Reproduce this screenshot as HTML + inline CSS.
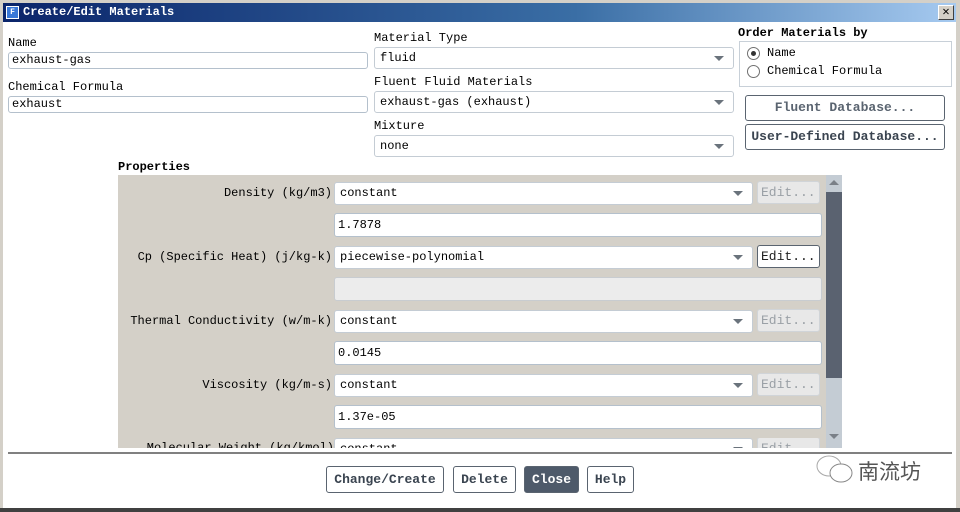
<!DOCTYPE html>
<html><head><meta charset="utf-8"><style>
*{box-sizing:border-box;margin:0;padding:0}
body{width:960px;height:512px;overflow:hidden;background:#d4d0c8;font-family:"Liberation Mono","Noto Sans CJK SC",monospace;font-size:12px;color:#000;position:relative}
.a{position:absolute;white-space:nowrap}
.win{position:absolute;left:3px;top:3px;width:953px;height:505px;background:#fff}
.title{position:absolute;left:3px;top:3px;width:953px;height:19px;background:linear-gradient(90deg,#0a246a,#3a6ea5 60%,#a6caf0)}
.in{position:absolute;background:#fff;border:1px solid #b4c0cc;border-radius:3px;padding:0 3px;line-height:15px}
.sel{position:absolute;background:#fff;border:1px solid #c4ccd4;border-radius:3px;padding:0 5px;line-height:20px}
.sel:after{content:"";position:absolute;right:9px;top:8px;border-left:5px solid transparent;border-right:5px solid transparent;border-top:5px solid #6a737c}
.btn{position:absolute;border:1px solid #5a6470;border-radius:3px;text-align:center;font-weight:bold;color:#3a4450;background:#fff;font-size:13px}
.ed{position:absolute;width:63px;height:23px;border:1px solid #d0d4d8;border-radius:3px;background:#e8e8e8;color:#9aa0a6;line-height:21px;padding-left:3px;font-size:13px}
.lbl{position:absolute;right:628px;text-align:right;white-space:nowrap}
</style></head><body>
<div class="win"></div>
<div class="title"></div>
<div class="a" style="left:6px;top:6px;width:13px;height:13px;background:#3a78d8;border:1px solid #fff;color:#fff;font-size:8px;line-height:11px;text-align:center;font-weight:bold">F</div>
<div class="a" style="left:23px;top:5px;color:#fff;font-weight:bold;line-height:15px">Create/Edit Materials</div>
<div class="a" style="left:938px;top:5px;width:16px;height:15px;background:#d4d0c8;border:1px solid;border-color:#fff #404040 #404040 #fff;font-weight:bold;text-align:center;line-height:12px">✕</div>

<div class="a" style="left:8px;top:36px">Name</div>
<div class="in" style="left:8px;top:52px;width:360px;height:17px">exhaust-gas</div>
<div class="a" style="left:8px;top:80px">Chemical Formula</div>
<div class="in" style="left:8px;top:96px;width:360px;height:17px">exhaust</div>

<div class="a" style="left:374px;top:31px">Material Type</div>
<div class="sel" style="left:374px;top:47px;width:360px;height:22px">fluid</div>
<div class="a" style="left:374px;top:75px">Fluent Fluid Materials</div>
<div class="sel" style="left:374px;top:91px;width:360px;height:22px">exhaust-gas (exhaust)</div>
<div class="a" style="left:374px;top:119px">Mixture</div>
<div class="sel" style="left:374px;top:135px;width:360px;height:22px">none</div>

<div class="a" style="left:738px;top:26px;font-weight:bold">Order Materials by</div>
<div class="a" style="left:739px;top:41px;width:213px;height:46px;border:1px solid #c8d0d8"></div>
<div class="a" style="left:747px;top:47px;width:13px;height:13px;border:1px solid #707070;border-radius:50%;background:#fff"><div style="margin:3px;width:5px;height:5px;border-radius:50%;background:#333"></div></div>
<div class="a" style="left:767px;top:46px">Name</div>
<div class="a" style="left:747px;top:65px;width:13px;height:13px;border:1px solid #707070;border-radius:50%;background:#fff"></div>
<div class="a" style="left:767px;top:64px">Chemical Formula</div>
<div class="btn" style="left:745px;top:95px;width:200px;height:26px;line-height:24px;color:#5a6470">Fluent Database...</div>
<div class="btn" style="left:745px;top:124px;width:200px;height:26px;line-height:24px">User-Defined Database...</div>

<div class="a" style="left:118px;top:160px;font-weight:bold">Properties</div>
<div class="a" style="left:118px;top:175px;width:724px;height:273px;background:#d4d0c8;overflow:hidden"></div>
<div class="a" style="left:826px;top:175px;width:16px;height:273px;background:#c4ccd4"></div>
<div class="a" style="left:826px;top:192px;width:16px;height:186px;background:#5a6270"></div>
<div class="a" style="left:829px;top:180px;border-left:5px solid transparent;border-right:5px solid transparent;border-bottom:5px solid #7a8088"></div>
<div class="a" style="left:829px;top:434px;border-left:5px solid transparent;border-right:5px solid transparent;border-top:5px solid #7a8088"></div>

<div class="lbl" style="top:186px">Density (kg/m3)</div>
<div class="sel" style="left:334px;top:182px;width:419px;height:23px">constant</div>
<div class="ed" style="left:757px;top:181px">Edit...</div>
<div class="in" style="left:334px;top:213px;width:488px;height:24px;line-height:22px">1.7878</div>

<div class="lbl" style="top:250px">Cp (Specific Heat) (j/kg-k)</div>
<div class="sel" style="left:334px;top:246px;width:419px;height:23px">piecewise-polynomial</div>
<div class="ed" style="left:757px;top:245px;background:#fff;border-color:#5a6470;color:#222">Edit...</div>
<div class="in" style="left:334px;top:277px;width:488px;height:24px;background:#ececec;border-color:#c8ccd0"></div>

<div class="lbl" style="top:314px">Thermal Conductivity (w/m-k)</div>
<div class="sel" style="left:334px;top:310px;width:419px;height:23px">constant</div>
<div class="ed" style="left:757px;top:309px">Edit...</div>
<div class="in" style="left:334px;top:341px;width:488px;height:24px;line-height:22px">0.0145</div>

<div class="lbl" style="top:378px">Viscosity (kg/m-s)</div>
<div class="sel" style="left:334px;top:374px;width:419px;height:23px">constant</div>
<div class="ed" style="left:757px;top:373px">Edit...</div>
<div class="in" style="left:334px;top:405px;width:488px;height:24px;line-height:22px">1.37e-05</div>

<div class="a" style="left:118px;top:438px;width:708px;height:10px;overflow:hidden">
 <div class="lbl" style="right:492px;top:3px;position:absolute">Molecular Weight (kg/kmol)</div>
 <div class="sel" style="left:216px;top:0;width:419px;height:23px">constant</div>
 <div class="ed" style="left:639px;top:-1px">Edit...</div>
</div>

<div class="a" style="left:8px;top:452px;width:944px;height:2px;background:#808080"></div>
<div class="btn" style="left:326px;top:466px;width:118px;height:27px;line-height:25px">Change/Create</div>
<div class="btn" style="left:453px;top:466px;width:63px;height:27px;line-height:25px">Delete</div>
<div class="btn" style="left:524px;top:466px;width:55px;height:27px;line-height:25px;background:#4e5a6a;color:#fff">Close</div>
<div class="btn" style="left:587px;top:466px;width:47px;height:27px;line-height:25px">Help</div>

<svg class="a" style="left:812px;top:452px" width="46" height="34"><ellipse cx="17" cy="14" rx="12" ry="10" fill="#fff" stroke="#aaa"/><ellipse cx="29" cy="21" rx="11" ry="9" fill="#fff" stroke="#888"/></svg>
<div class="a" style="left:858px;top:456px;font-family:'Noto Sans CJK SC',sans-serif;font-size:21px;color:#555">南流坊</div>
<div class="a" style="left:0;top:508px;width:960px;height:4px;background:#404040"></div>
</body></html>
